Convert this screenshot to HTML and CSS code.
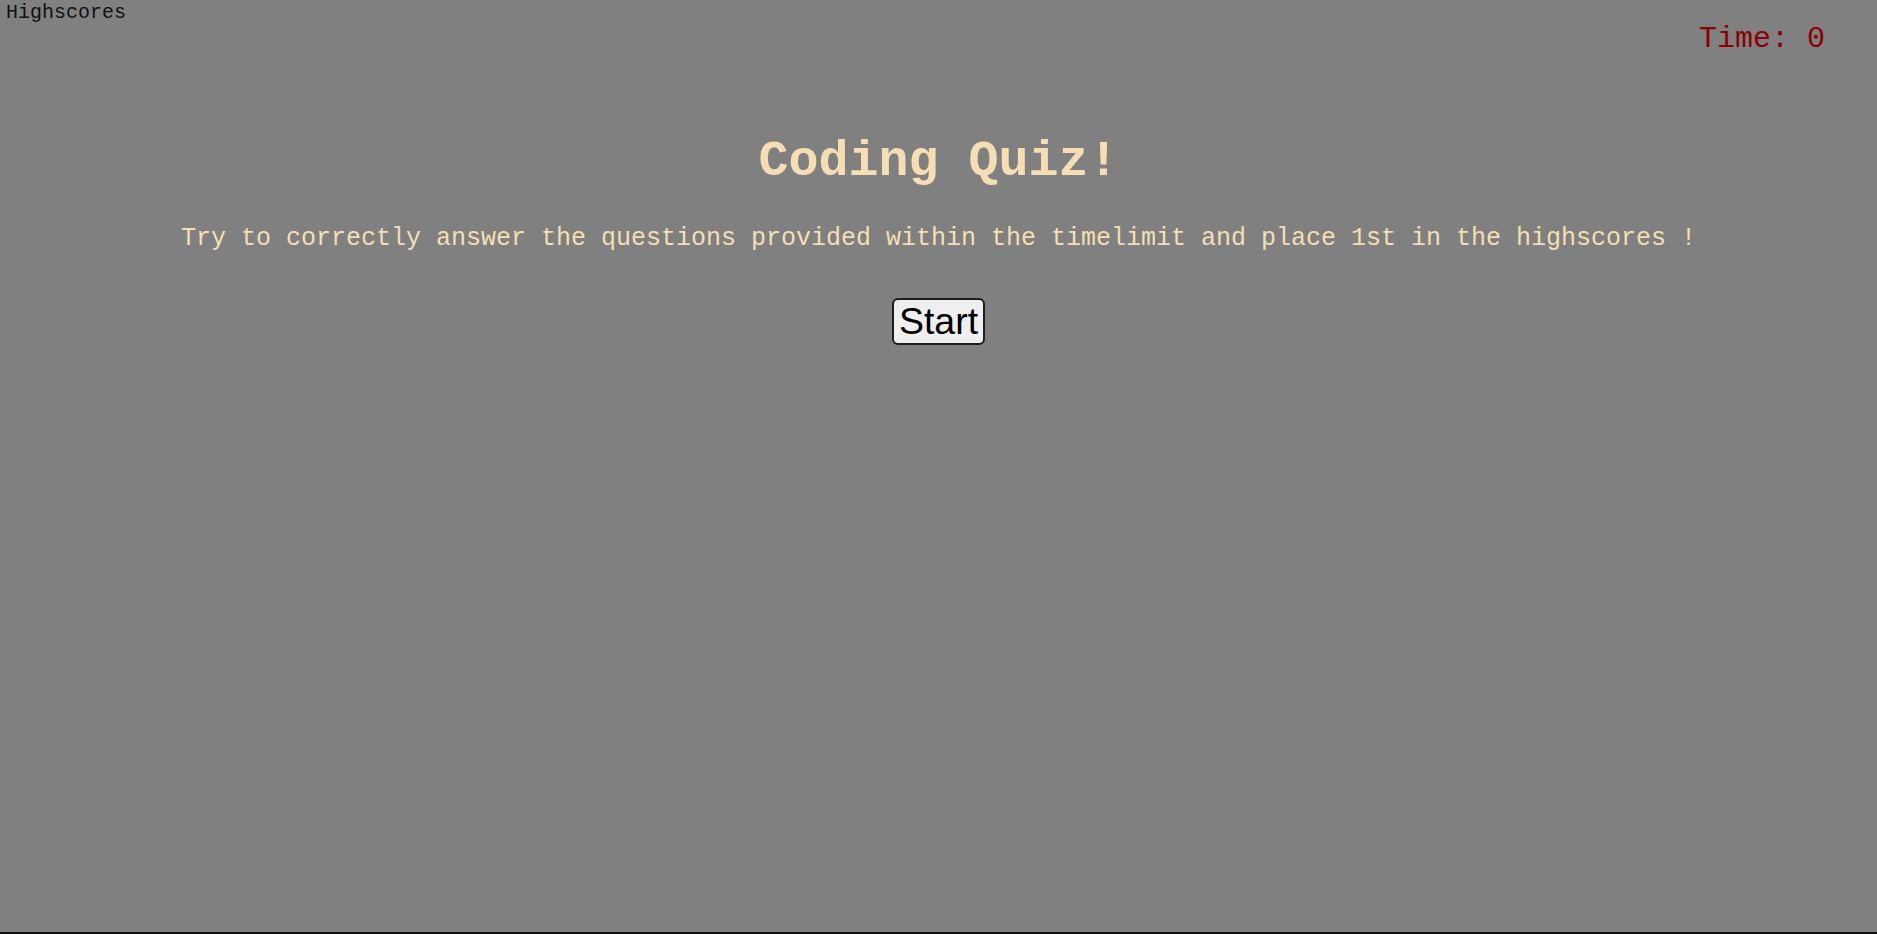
FILE: index.html
```html
<!DOCTYPE html>
<html lang="en">
<head>
<meta charset="utf-8">
<title>Coding Quiz</title>
<link rel="stylesheet" href="styles.css">
</head>
<body>
<div class="page">
  <header class="topbar">
    <a class="highscores" href="#">Highscores</a>
    <span class="timer">Time: 0</span>
  </header>
  <main class="intro">
    <h1 class="title">Coding Quiz!</h1>
    <p class="lead">Try to correctly answer the questions provided within the timelimit and place 1st in the highscores !</p>
    <button class="start-btn" type="button">Start</button>
  </main>
</div>
</body>
</html>
```
FILE: styles.css
```css
html, body {
  margin: 0;
  padding: 0;
}

body {
  background: #808080;
  font-family: "Liberation Mono", "Courier New", monospace;
}

.page {
  min-height: 100vh;
  box-sizing: border-box;
  border-bottom: 2px solid #111318;
  display: flex;
  flex-direction: column;
}

.topbar {
  display: flex;
  justify-content: space-between;
  align-items: flex-start;
  padding: 1px 52px 0 6px;
}

.highscores {
  font-size: 20px;
  line-height: normal;
  color: #111;
  text-decoration: none;
}

.timer {
  margin-top: 21px;
  font-size: 30px;
  line-height: normal;
  color: #8b0000;
}

.intro {
  display: flex;
  flex-direction: column;
  align-items: center;
  text-align: center;
}

.title {
  margin: 77px 0 0;
  font-size: 50px;
  font-weight: bold;
  line-height: normal;
  color: #f5deb3;
}

.lead {
  margin: 34px 0 0;
  font-size: 25px;
  line-height: normal;
  color: #f5deb3;
}

.start-btn {
  margin-top: 45px;
  font-family: "Liberation Sans", Arial, sans-serif;
  font-size: 37.5px;
  line-height: normal;
  padding: 0 5px;
  border: 2px solid #1e1e1e;
  border-radius: 6px;
  background: #efefef;
  color: #000;
  cursor: pointer;
}
```
